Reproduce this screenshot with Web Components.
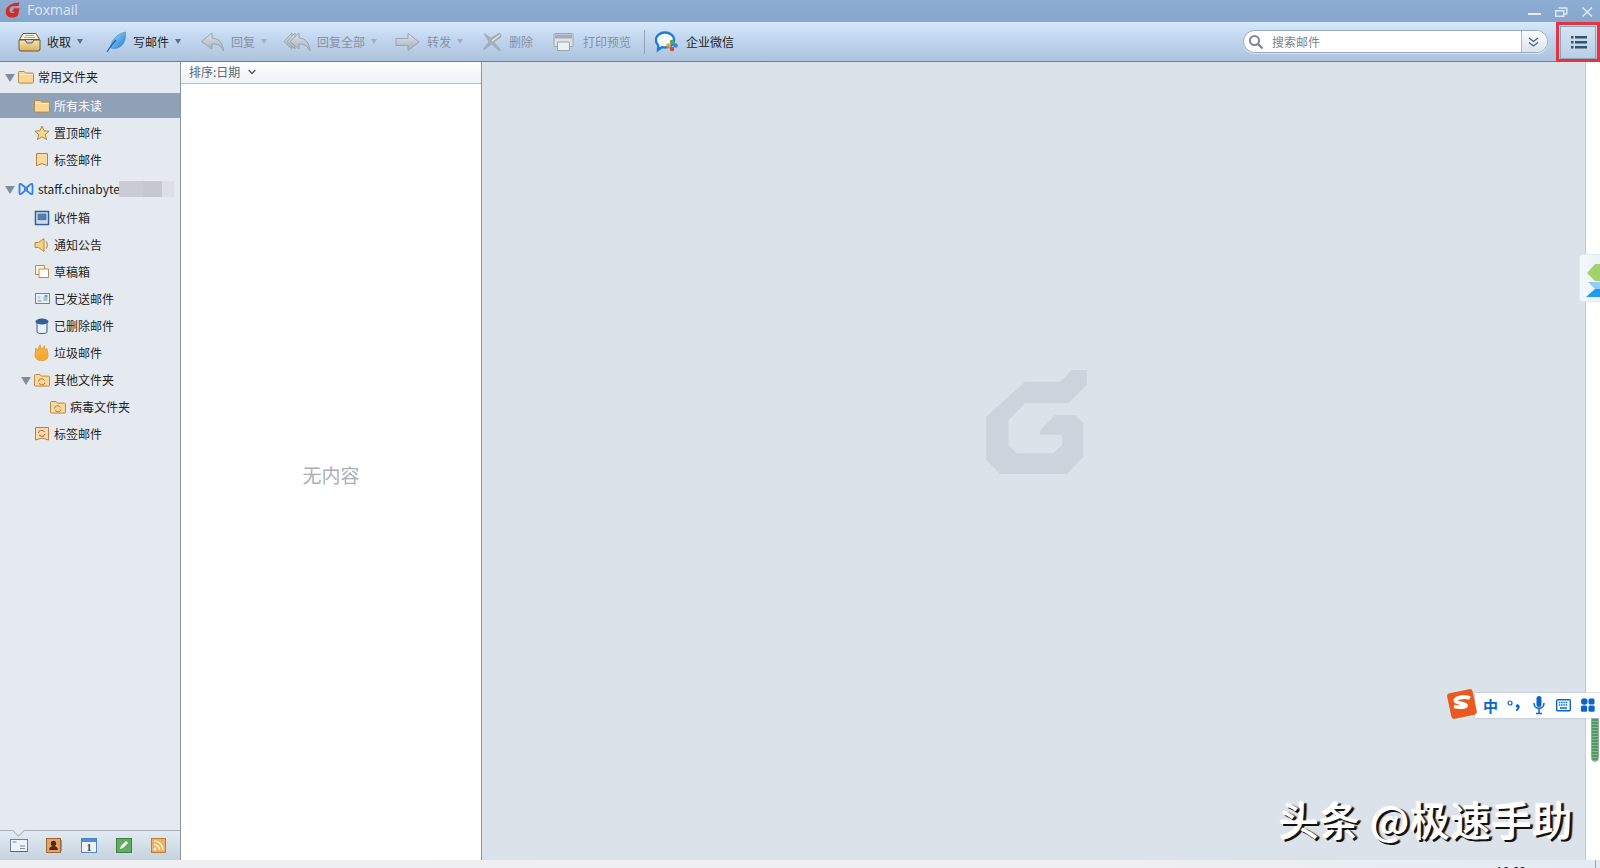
<!DOCTYPE html>
<html lang="zh"><head><meta charset="utf-8"><title>Foxmail</title>
<style>
html,body{margin:0;height:100%;overflow:hidden;background:#eef0f2}
body{font-family:"Noto Sans CJK SC","Noto Sans",sans-serif;font-size:12px}
</style></head><body>
<fm-app>
  <fm-titlebar slot="title">Foxmail</fm-titlebar>
  <fm-toolbar slot="tools">
    <fm-tool icon="fetch" style="--ml:0px;--gap:6px" caret>收取</fm-tool>
    <fm-tool icon="feather" style="--ml:23px;--gap:7px" caret>写邮件</fm-tool>
    <fm-tool icon="reply" style="--ml:19px;--gap:6px" caret disabled>回复</fm-tool>
    <fm-tool icon="replyall" style="--ml:16px;--gap:6px" caret disabled>回复全部</fm-tool>
    <fm-tool icon="forward" style="--ml:18px;--gap:7px" caret disabled>转发</fm-tool>
    <fm-tool icon="delete" style="--ml:20px;--gap:7px" disabled>删除</fm-tool>
    <fm-tool icon="print" style="--ml:20px;--gap:9px" disabled>打印预览</fm-tool>
    <fm-tool separator style="--ml:13px"></fm-tool>
    <fm-tool icon="wework" style="--ml:10px;--gap:8px">企业微信</fm-tool>
    <fm-search slot="end">搜索邮件</fm-search>
    <fm-menu-button slot="end"></fm-menu-button>
  </fm-toolbar>
  <fm-sidebar slot="side">
    <fm-row level="0" arrow icon="folder" head>常用文件夹</fm-row>
    <fm-row level="1" icon="folder" selected>所有未读</fm-row>
    <fm-row level="1" icon="star">置顶邮件</fm-row>
    <fm-row level="1" icon="bookmark">标签邮件</fm-row>
    <fm-row level="0" arrow icon="exchange" head>staff.chinabyte<fm-redact slot="after"></fm-redact></fm-row>
    <fm-row level="1" icon="inbox">收件箱</fm-row>
    <fm-row level="1" icon="speaker">通知公告</fm-row>
    <fm-row level="1" icon="drafts">草稿箱</fm-row>
    <fm-row level="1" icon="sent">已发送邮件</fm-row>
    <fm-row level="1" icon="trash">已删除邮件</fm-row>
    <fm-row level="1" icon="flame">垃圾邮件</fm-row>
    <fm-row level="1" arrow icon="syncfolder">其他文件夹</fm-row>
    <fm-row level="2" icon="syncfolder">病毒文件夹</fm-row>
    <fm-row level="1" icon="synctag">标签邮件</fm-row>
  </fm-sidebar>
  <fm-list slot="list"></fm-list>
  <fm-preview slot="preview"></fm-preview>
  <fm-edge slot="edge"></fm-edge>
  <fm-taskbar slot="task"></fm-taskbar>
  <fm-ime slot="over"></fm-ime>
  <fm-watermark slot="over">头条 @极速手助</fm-watermark>
</fm-app>
<script>
const G='<svg xmlns="http://www.w3.org/2000/svg" ';
const ICONS={
folder:[16,14,'<path d="M.5 2.500a1 1 0 0 1 1-1h4.600l1.400 1.600h7a1 1 0 0 1 1 1v8a1 1 0 0 1-1 1h-13a1 1 0 0 1-1-1z" fill="#fbd592" stroke="#b98a45"/><path d="M1.500 4.500h13" stroke="#fdeccb"/>'],
star:[16,16,'<path d="M8 1l2.100 4.700 5 .5-3.800 3.300 1.200 5L8 11.900l-4.500 2.600 1.200-5L.9 6.200l5-.5z" fill="#f6d68a" stroke="#a88a4c"/>'],
bookmark:[14,15,'<path d="M1.500 1.500h11v12.200L7 11.600l-5.500 2.100z" fill="#fbd9a5" stroke="#bb7f3a"/>'],
exchange:[16,14,'<path d="M1.500 3c0-1.200 1-1.500 1.800-.9L7 5.200v3.600l-3.700 3.100c-.8.600-1.800.3-1.800-.9zM14.500 3c0-1.200-1-1.500-1.800-.9L9 5.200v3.600l3.700 3.100c.8.600 1.800.3 1.800-.9z" fill="none" stroke="#2a82e6" stroke-width="1.800"/>'],
inbox:[16,16,'<rect x="1.500" y="1.500" width="13" height="13" fill="#dfe9f2" stroke="#2f5f96" stroke-width="1.500"/><path d="M3.500 3.500h9v7h-9z" fill="#4e7fb0"/><path d="M3 10.500h10v2.500H3z" fill="#cfdde9"/>'],
speaker:[16,16,'<path d="M1 5.500h3.500l5.500-4v13l-5.500-4H1z" fill="#f6cf86" stroke="#bb8a3d"/><path d="M12 4.500c1.800 1.800 1.800 5.200 0 7" fill="none" stroke="#caa263" stroke-width="1.600"/>'],
drafts:[16,15,'<path d="M1.500 1.500h9v9h-9z" fill="#fff3de" stroke="#c08b48"/><path d="M5 5h9.500v8.500H5z" fill="#fff" stroke="#c08b48"/>'],
sent:[15,13,'<rect x=".5" y="1.500" width="14" height="10" fill="#e8eff5" stroke="#6a88a5"/><path d="M8.500 6h4M8.500 8h4M2.500 9h4" stroke="#7f93a8"/><rect x="9.500" y="3" width="3" height="2" fill="#7f9bb5"/><path d="M2.500 4h3v3h-3z" fill="#c5d6e4"/>'],
trash:[14,16,'<path d="M2 4h10v10c0 1-2 1.500-5 1.500S2 15 2 14z" fill="#eaf0f6" stroke="#2f5f96"/><ellipse cx="7" cy="3.500" rx="6.500" ry="3" fill="#2f5f96"/>'],
flame:[16,17,'<path d="M8 16.500c-4.500 0-7-2-7-5 0-2.500.5-4.500.8-7.500 1 .8 1.700 1.800 2 3.200.4-2.500 1-4.700 2.300-6.500.5 2.300.8 4 1.800 5.500.5-1.500 1.200-3 2.500-4.500.2 2.500.6 3.800 1.200 4.800.3-.8.6-1.300 1.200-2 .8 2.500 1.200 4.500 1.200 7 0 3.500-2.500 5-6 5z" fill="#f4b047" stroke="#d98e2b" stroke-width=".7"/><ellipse cx="8" cy="12.800" rx="4.800" ry="3.200" fill="#f9a92a"/>'],
syncfolder:[16,14,'<path d="M.5 2.500a1 1 0 0 1 1-1h4.600l1.400 1.600h7a1 1 0 0 1 1 1v8a1 1 0 0 1-1 1h-13a1 1 0 0 1-1-1z" fill="#fad79c" stroke="#b98a45"/><path d="M4.500 8.500a3 3 0 0 1 5-2l1 1M11 9.500a3 3 0 0 1-5 1.500L5 10.500" fill="none" stroke="#c0762c"/>'],
synctag:[16,15,'<path d="M1.500 1.500h13v12.500l-6.500-2-6.500 2z" fill="#fbdcb0" stroke="#bb7f3a"/><path d="M4.500 7a3 3 0 0 1 5-2l1 1M11 8a3 3 0 0 1-5 1.500L5 9" fill="none" stroke="#b05a2c"/>'],
fetch:[23,20,'<defs><linearGradient id="f1" x1="0" y1="0" x2="0" y2="1"><stop offset="0" stop-color="#f8e5b0"/><stop offset="1" stop-color="#d6b064"/></linearGradient></defs><path d="M5 1.500h13l3.500 6H1.500z" fill="#fff6dc" stroke="#6f5a2b"/><path d="M7 3.500h9M6 5.500h11" stroke="#c4a565"/><path d="M1 8h6l2 3h5l2-3h6v9a2 2 0 0 1-2 2H3a2 2 0 0 1-2-2z" fill="url(#f1)" stroke="#6f5a2b"/>'],
feather:[20,22,'<defs><linearGradient id="f2" x1="0" y1="0" x2="1" y2="1"><stop offset="0" stop-color="#a6dcfb"/><stop offset="1" stop-color="#1e79d2"/></linearGradient></defs><path d="M19.500 1c1 7-2 14-8 16-3 1-5 .5-6.500 0C4.500 9 11 3 19.500 1z" fill="url(#f2)" stroke="#3e8fd6" stroke-width=".6"/><path d="M1 21c3-5 5-8 9-12" fill="none" stroke="#1c5f9c" stroke-width="1.200"/>'],
reply:[25,22,'<defs><linearGradient id="g1" x1="0" y1="0" x2="0" y2="1"><stop offset="0" stop-color="#dfe6ec"/><stop offset="1" stop-color="#a3aeb8"/></linearGradient></defs><path d="M12 2L1.500 10.500 12 18v-5c5-.5 9 1.500 11.500 7-.5-8-4.500-12.500-11.500-13z" fill="url(#g1)" stroke="#98a4b0"/>'],
replyall:[28,22,'<defs><linearGradient id="g2" x1="0" y1="0" x2="0" y2="1"><stop offset="0" stop-color="#dfe6ec"/><stop offset="1" stop-color="#a3aeb8"/></linearGradient></defs><path d="M9 2L1 10.500 9 18z" fill="url(#g2)" stroke="#98a4b0"/><path d="M12 2L4 10.500 12 18z" fill="url(#g2)" stroke="#98a4b0"/><path d="M16 2L7 10.500 16 18v-5c4.500-.5 8 1.500 11 7-.5-8-4-12.500-11-13z" fill="url(#g2)" stroke="#98a4b0"/>'],
forward:[25,20,'<defs><linearGradient id="g3" x1="0" y1="0" x2="0" y2="1"><stop offset="0" stop-color="#dfe6ec"/><stop offset="1" stop-color="#a3aeb8"/></linearGradient></defs><path d="M1 6.500h12V1.500l11 8.500-11 8.500v-5H1z" fill="url(#g3)" stroke="#98a4b0"/>'],
delete:[19,20,'<path d="M1 1.500l7 4.500 8-5c2 1 2.500 2 2 4L11 10l6 7.500c.5 1 0 1.500-1 1L8.500 12 1 18c-.8 0-.8-1-.5-1.500L6 10z" fill="#a6b0ba" stroke="#98a4b0" stroke-width=".6"/><path d="M9 9l8-6" stroke="#dfe5ea" stroke-width="1.500"/>'],
print:[21,20,'<rect x="1" y="1.500" width="19" height="13" rx="1" fill="#dde3e9" stroke="#99a5b1"/><rect x="2" y="2.500" width="17" height="4" fill="#a2adb8"/><path d="M4.500 10h12v8.500h-12z" fill="#eef1f4" stroke="#99a5b1"/>'],
wework:[23,22,'<path d="M10 1.500c5 0 9 3 9 7.500s-4 7.500-9 7.500c-1 0-2-.1-3-.4L3 19l.3-4.500C1.800 13 1 11 1 9c0-4.500 4-7.500 9-7.500z" fill="#fff" stroke="#1b7fd8" stroke-width="2.400"/><circle cx="17" cy="11" r="2.300" fill="#5ba83a"/><circle cx="13.500" cy="14.500" r="2.300" fill="#f09c2e"/><circle cx="20.500" cy="14.500" r="2.300" fill="#2a8bdc"/><circle cx="17" cy="18" r="2.300" fill="#d94a34"/>'],
};
function icon(name){const d=ICONS[name];return d?`${G}width="${d[0]}" height="${d[1]}" viewBox="0 0 ${d[0]} ${d[1]}">${d[2]}</svg>`:'';}
function def(name,css,html){
  customElements.define(name,class extends HTMLElement{
    constructor(){super();this.attachShadow({mode:'open'});}
    connectedCallback(){
      const h=typeof html==='function'?html(this):html;
      this.shadowRoot.innerHTML=`<style>${css}</style>${h}`;
    }
  });
}
def('fm-app',`:host{display:grid;position:relative;width:1600px;height:868px;overflow:hidden;grid-template-columns:181px 301px 1fr 15px;grid-template-rows:22px 40px 1fr 8px;grid-template-areas:"t t t t" "b b b b" "s l p e" "k k k k"}
.t{grid-area:t;display:block}.b{grid-area:b;display:block}.s{grid-area:s}.l{grid-area:l}.p{grid-area:p}.e{grid-area:e}.k{grid-area:k}
slot{display:block;min-height:0;min-width:0}`,
`<slot class="t" name="title"></slot><slot class="b" name="tools"></slot><slot class="s" name="side"></slot><slot class="l" name="list"></slot><slot class="p" name="preview"></slot><slot class="e" name="edge"></slot><slot class="k" name="task"></slot><slot name="over"></slot>`);

def('fm-titlebar',`:host{display:flex;height:22px;align-items:center;background:linear-gradient(#8fadd2,#86a6cd);color:#dbe7f3;font:14px/20px "Open Sans","Noto Sans",sans-serif;padding:0 0 2px 5px;box-sizing:border-box}
.logo{margin-right:6px;display:block}.ctl{margin-left:auto;display:flex;align-items:center;margin-top:2px}
.ctl svg{display:block}`,
`<svg class="logo" width="16" height="16" viewBox="0 0 16 16"><path d="M9.500 1l5-.5-1 3.500-6 .3C5 4.800 4.300 6.500 4.500 8.500c.2 2 2 2.800 4 2.500l1.500-1.500-3 .2 2-3.500h5.500l-1.500 7c-2 2-4.500 2.500-7 2.200C2 15 .5 12 .8 9c.3-3 3-6.500 8.700-8z" fill="#d9281f"/></svg><slot></slot>
<div class="ctl"><svg width="72" height="22" viewBox="0 0 72 22"><rect x="0" y="13" width="13" height="2" fill="#e4edf6"/><g fill="none" stroke="#dbe7f3" stroke-width="1.500"><rect x="27.750" y="10.750" width="8" height="5.500"/><path d="M30.750 8h8v6h-2.500"/></g><path d="M54.500 7.500L64 16.500M64 7.500L54.500 16.500" stroke="#dbe7f3" stroke-width="1.700"/></svg></div>`);

def('fm-toolbar',`:host{display:flex;height:40px;box-sizing:border-box;padding-left:18px;align-items:center;background:linear-gradient(#d6e8fb,#c2d7ef 40%,#adc3dd);border-bottom:1px solid #6d7f94}
.end{margin-left:auto;display:flex;align-items:center}`,
`<slot></slot><div class="end"><slot name="end"></slot></div>`);

def('fm-tool',`:host{display:flex;align-items:center;margin-left:var(--ml,0);color:#1f1f1f;white-space:nowrap}
:host([disabled]){color:#86929e}
svg{display:block}.lb{margin-left:var(--gap,6px)}
.c{width:0;height:0;border:3.5px solid transparent;border-top:5px solid #5c6f85;border-bottom:0;margin-left:6px}
:host([disabled]) .c{border-top-color:#a4b1be}
.sep{width:1px;height:24px;background:#8fa1b5}`,
el=>el.hasAttribute('separator')?'<div class="sep"></div>':`${icon(el.getAttribute('icon'))}<span class="lb"><slot></slot></span>${el.hasAttribute('caret')?'<i class="c"></i>':''}`);

def('fm-search',`:host{display:flex;align-items:center;width:305px;height:23px;box-sizing:border-box;border:1px solid #97a9bd;border-radius:12px;background:#fff;color:#7f7f7f;margin-right:12px;overflow:hidden;box-shadow:0 1px 0 #d5e3f0}
.m{margin:0 8px 0 4px;display:block}.t{flex:1}
.d{width:26px;height:100%;box-sizing:border-box;padding-right:3px;border-left:1px solid #a9b8c8;background:linear-gradient(#fbfcfe,#dbe4ec);display:flex;align-items:center;justify-content:center}`,
`<svg class="m" width="16" height="16" viewBox="0 0 16 16"><circle cx="6.500" cy="6.500" r="4.500" fill="#fff" stroke="#7c8791" stroke-width="2"/><path d="M10 10l4.500 4.500" stroke="#7c8791" stroke-width="2.400"/></svg><span class="t"><slot></slot></span>
<span class="d"><svg width="11" height="10" viewBox="0 0 11 10"><path d="M1 1l4.500 3.500L10 1M1 5.500l4.500 3.500L10 5.500" fill="none" stroke="#4f6477" stroke-width="1.300"/></svg></span>`);

def('fm-menu-button',`:host{display:flex;position:relative;width:36px;height:33px;margin:1px 4px 0 0;box-sizing:border-box;align-items:center;justify-content:center;background:linear-gradient(#d6e4f3,#b9cde3);border:1px solid #8da3ba}
.hl{position:absolute;left:-5px;top:-5px;width:44px;height:40px;box-sizing:border-box;border:3px solid #e5343f}
svg{display:block;margin-left:2px}`,
`<svg width="16" height="13" viewBox="0 0 16 13"><g fill="#33536f"><rect x="0" y="0" width="2.500" height="2.500"/><rect x="4" y="0" width="12" height="2.500"/><rect x="0" y="5" width="2.500" height="2.500"/><rect x="4" y="5" width="12" height="2.500"/><rect x="0" y="10" width="2.500" height="2.500"/><rect x="4" y="10" width="12" height="2.500"/></g></svg><div class="hl"></div>`);

def('fm-sidebar',`:host{display:flex;flex-direction:column;height:100%;background:#e5eaf0;border-right:1px solid #8d97a2;box-sizing:border-box}
.tree{flex:1;min-height:0;display:flex;flex-direction:column;gap:2px;padding-top:2px}
.bar{position:relative;height:30px;box-sizing:border-box;border-top:1px solid #a6afb8;background:linear-gradient(#e2ebf3,#c5d2dd);display:flex;align-items:center}
.bar svg{position:relative;display:block;flex:none}
.n{position:absolute;left:14px;top:-5px;width:8px;height:8px;transform:rotate(45deg);background:#e5eaf0;border:1px solid #a6afb8;border-top:0;border-left:0}`,
`<div class="tree"><slot></slot></div><div class="bar"><i class="n"></i>
<svg style="margin-left:10px" width="18" height="13" viewBox="0 0 18 13"><rect x=".5" y=".5" width="17" height="12" fill="#eef3f7" stroke="#6b8298"/><path d="M2.500 3h4M10 7h5M10 9.500h5" stroke="#7b8fa2"/><path d="M.5 12.500h17" stroke="#4a6a88"/></svg>
<svg style="margin-left:18px" width="16" height="15" viewBox="0 0 16 15"><rect x=".5" y=".5" width="14" height="14" fill="#e8a468" stroke="#96683a"/><circle cx="7.500" cy="5.500" r="2.700" fill="#4a2d18"/><path d="M3 12c.5-3 2-4 4.500-4S11.500 9 12 12z" fill="#4a2d18"/><path d="M15.500 2v11" stroke="#c88f5a"/></svg>
<svg style="margin-left:19px" width="16" height="15" viewBox="0 0 16 15"><rect x=".5" y=".5" width="15" height="14" fill="#eef3f8" stroke="#5585b5"/><rect x="1" y="1" width="14" height="3" fill="#4b8fd6"/><text x="8" y="13" text-anchor="middle" font-family="Liberation Serif" font-weight="700" font-size="10" fill="#25486d">1</text></svg>
<svg style="margin-left:19px" width="16" height="15" viewBox="0 0 16 15"><rect x=".5" y=".5" width="15" height="14" fill="#62ac62" stroke="#3f7f44"/><path d="M4 11l1-3 5-5 2 2-5 5z" fill="#fff"/></svg>
<svg style="margin-left:19px" width="15" height="15" viewBox="0 0 15 15"><rect x=".5" y=".5" width="14" height="14" fill="#eeb15f" stroke="#b9803a"/><circle cx="4" cy="11" r="1.500" fill="#fff2d8"/><path d="M3 6.500c3 0 5.500 2.500 5.500 5.500M3 3c5 0 9 4 9 9" fill="none" stroke="#fff2d8" stroke-width="1.600"/></svg>
</div>`);

def('fm-row',`:host{display:flex;position:relative;align-items:center;height:25px;flex:none;color:#1f1f1f;white-space:nowrap;box-sizing:border-box}
:host([head]){margin:2px 0}
:host([head]:first-child){margin:0 0 2px}
:host([selected]){background:#8fa1b6;color:#fff}
.a{width:0;height:0;border:5px solid transparent;border-top:8px solid #7f8e9d;border-bottom:0;margin-top:2px;flex:none}
.i{flex:none;display:flex;width:16px;justify-content:center}.i svg{display:block}
.t{margin-left:4px}`,
el=>{const lv=el.getAttribute('level'),ar=el.hasAttribute('arrow');
 const pad=lv==0?5:lv==1?(ar?21:34):50;
 return `<div style="width:${pad}px;flex:none"></div>${ar?'<i class="a"></i><div style="width:3px"></div>':''}<span class="i">${icon(el.getAttribute('icon'))}</span><span class="t"><slot></slot></span><slot name="after"></slot>`;});
def('fm-redact',`:host{display:flex;height:16px;flex:none;margin-left:-1px}
i{display:block;height:16px}`,`<i style="width:24px;background:#c9cdd3"></i><i style="width:19px;background:#c5c9cf"></i><i style="width:12px;background:#dce0e5"></i>`);

def('fm-list',`:host{display:flex;flex-direction:column;height:100%;background:#fff;border-right:1px solid #8d97a2;box-sizing:border-box}
.h{height:22px;flex:none;box-sizing:border-box;padding:0 0 2px 8px;display:flex;align-items:center;color:#5e666e;background:linear-gradient(#fdfeff,#eef2f6);border-bottom:1px solid #b3bdc6}
svg{margin-left:8px;display:block}
.e{flex:1;display:flex;align-items:center;justify-content:center;color:#a9afb5;font-size:19px;padding-top:4px}`,
`<div class="h">排序:日期<svg width="8" height="6" viewBox="0 0 8 6"><path d="M.7 1l3.300 3.500L7.300 1" fill="none" stroke="#4f5b66" stroke-width="1.400"/></svg></div><div class="e">无内容</div>`);

def('fm-preview',`:host{display:flex;height:100%;background:#dbe2ea;align-items:center;justify-content:center;box-sizing:border-box;padding:0 0 78px 6px}
svg{display:block}`,
`<svg width="101" height="104" viewBox="78 60 302 312"><path d="M335 60H380V105L325 160H195L145 210V285L170 310H280L305 285V255H240V240L285 195H345L370 220V320L320 372H120L78 330V200L195 95H300Z" fill="#ccd3dc"/></svg>`);

def('fm-edge',`:host{display:block;position:relative;height:100%;background:#fff;border-left:1px solid #c6c9cd;box-sizing:border-box}
.tab{position:absolute;left:-7px;top:192px;width:22px;height:48px;box-sizing:border-box;background:linear-gradient(90deg,#f3f8fd,#e9f3fb);border:1px solid #e2e8ee;border-right:0;border-radius:3px 0 0 3px;overflow:hidden}
svg{display:block}
.bar{position:absolute;left:5px;top:656px;width:8px;height:44px;border-radius:0 0 4px 4px;background:repeating-linear-gradient(#4d9a65 0 2px,#7fbb8e 2px 3px);border:1px solid #9aa9a0;box-sizing:border-box}`,
`<div class="tab"><svg width="22" height="48" viewBox="0 0 22 48"><path d="M7 18l8-9h7v17h-7z" fill="#a2d36a"/><path d="M8 27h14v7h-7z" fill="#8dcdf8"/><path d="M15 34h7v8H6z" fill="#1f9bf0"/></svg></div><div class="bar"></div>`);

def('fm-taskbar',`:host{display:block;position:relative;height:8px;overflow:hidden;background:linear-gradient(90deg,#eeeff1,#eef0f2 70%,#e2ebf4);}
.c{position:absolute;left:1496px;top:6px;font:12px "Liberation Sans",sans-serif;color:#222;line-height:12px}
.d{position:absolute;left:1595px;top:0;width:1px;height:8px;background:#9aa3ad}`,
`<span class="c">10:23</span><i class="d"></i>`);

def('fm-ime',`:host{display:block;position:absolute;left:1475px;top:693px;width:125px;height:25px;background:#fff;box-shadow:0 0 2px #9fb0c4;box-sizing:border-box}
.s{position:absolute;left:-29px;top:-5px;width:32px;height:32px;display:block}
.ic{position:absolute;top:0;display:block}
.z{position:absolute;left:8px;top:0;line-height:25px;font-size:15px;font-weight:700;color:#0866c6}`,
`<svg class="s" viewBox="0 0 32 32"><rect x="3" y="3" width="26" height="26" rx="3" fill="#ea5a20" transform="rotate(-12 16 16)"/><path d="M24 10c-3-1.200-13-1.500-14.500 2-1 3.500 10 3 10.500 5.500.3 1.800-7 2-12 1" fill="none" stroke="#fff" stroke-width="3.800"/></svg>
<span class="z">中</span>
<svg class="ic" style="left:32px" width="14" height="25" viewBox="0 0 14 25"><circle cx="3" cy="10" r="2" fill="none" stroke="#0866c6" stroke-width="1.200"/><circle cx="10.500" cy="13" r="1.800" fill="#0866c6"/><path d="M12 13c0 2-1.200 3.500-3 4.500" fill="none" stroke="#0866c6" stroke-width="1.600"/></svg>
<svg class="ic" style="left:58px" width="12" height="25" viewBox="0 0 12 25"><rect x="3.500" y="3" width="5" height="11" rx="2.500" fill="#0866c6"/><path d="M1 10c0 7 10 7 10 0M6 16v4M3 20.500h6" fill="none" stroke="#0866c6" stroke-width="1.500"/></svg>
<svg class="ic" style="left:81px" width="15" height="25" viewBox="0 0 15 25"><rect x=".7" y="6.700" width="13.600" height="11" rx="1" fill="none" stroke="#0866c6" stroke-width="1.400"/><path d="M3 9.500h9M3 12h9" stroke="#0866c6" stroke-width="1.500" stroke-dasharray="1.400 .8"/><path d="M4 15h7" stroke="#0866c6" stroke-width="1.500"/></svg>
<svg class="ic" style="left:106px" width="14" height="25" viewBox="0 0 14 25"><g fill="#0866c6"><circle cx="3.300" cy="8.500" r="3.300"/><rect x="7.500" y="5.500" width="6" height="6" rx="1.500"/><rect x="0" y="12.500" width="6.200" height="6.200" rx="1.500"/><rect x="7.500" y="12.500" width="6.200" height="6.200" rx="1.500"/></g></svg>`);

def('fm-watermark',`:host{display:block;position:absolute;left:1279px;top:789px;font:500 40px/60px "Noto Sans CJK SC",sans-serif;letter-spacing:.8px;color:#fff;white-space:nowrap;text-shadow:2px 2px 0 #111,3px 1px 1px #333,-1px -1px 1px #fff}`,`<slot></slot>`);
</script>
</body></html>
